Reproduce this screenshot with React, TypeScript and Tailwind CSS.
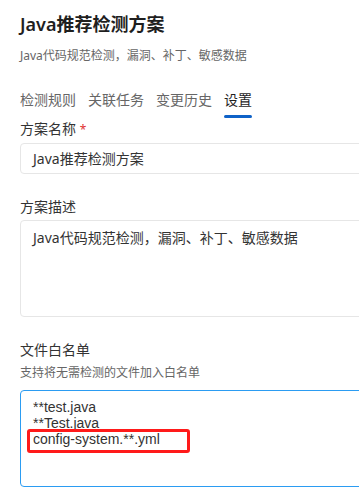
import React from "react";

const font = {
  fontFamily: '"Segoe UI", "Noto Sans", "Noto Sans CJK SC", sans-serif',
};

export default function App() {
  const tabs = ["检测规则", "关联任务", "变更历史", "设置"];
  return (
    <div
      className="w-[359px] h-[488px] overflow-hidden bg-white pl-5 text-[#333]"
      style={font}
    >
      <h1 className="mt-[12px] text-[18px] leading-[24px] font-semibold text-[#1f1f1f]">
        Java推荐检测方案
      </h1>
      <p className="mt-[10px] text-[12px] leading-[20px] text-[#666]">
        Java代码规范检测，漏洞、补丁、敏感数据
      </p>
      <div className="mt-[24px] flex gap-3">
        {tabs.map((t, i) => (
          <div key={t} className="flex flex-col">
            <span
              className={
                "text-[14px] leading-[20px] " +
                (i === 3 ? "text-[#1f1f1f]" : "text-[#666]")
              }
            >
              {t}
            </span>
            <div
              className={
                "mt-[5px] h-[3px] rounded-full " +
                (i === 3 ? "bg-[#0f62c8]" : "bg-transparent")
              }
            />
          </div>
        ))}
      </div>
      <div className="mt-[1px] text-[14px] leading-[20px] text-[#333]">
        方案名称 <span className="text-[#e03030] text-[12px]">*</span>
      </div>
      <div className="mt-[3px] w-[400px] h-[31px] rounded-[4px] border border-[#e6e6e6] pl-3 flex items-center text-[14px] text-[#333]">
        Java推荐检测方案
      </div>
      <div className="mt-[23px] text-[14px] leading-[20px] text-[#333]">
        方案描述
      </div>
      <div className="mt-[3px] w-[400px] h-[97px] rounded-[4px] border border-[#e6e6e6] pl-3 pt-[7px] text-[14px] leading-[20px] text-[#333]">
        Java代码规范检测，漏洞、补丁、敏感数据
      </div>
      <div className="mt-[23px] text-[14px] leading-[20px] text-[#333]">
        文件白名单
      </div>
      <div className="mt-[3px] text-[12px] leading-[20px] text-[#666]">
        支持将无需检测的文件加入白名单
      </div>
      <div
        className="relative mt-[7px] w-[400px] h-[97px] rounded-[4px] border border-[#2b9cf2] pl-3 pt-[8px] text-[14px] leading-[16px] text-[#333]"
        style={{ fontFamily: '"Liberation Sans", Arial, sans-serif' }}
      >
        <div>**test.java</div>
        <div>**Test.java</div>
        <div>config-system.**.yml</div>
        <div className="absolute left-[6px] top-[38px] w-[163px] h-[24px] rounded-[3px] border-[3px] border-[#ff1a1a]" />
      </div>
    </div>
  );
}
